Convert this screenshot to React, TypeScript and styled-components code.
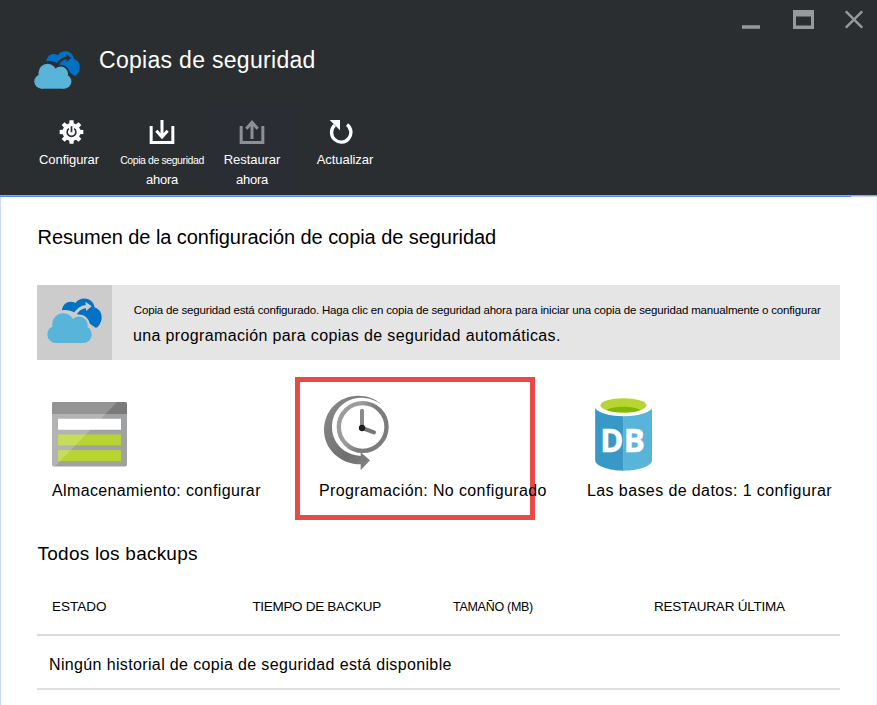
import React from "react";
import styled, { createGlobalStyle } from "styled-components";

const HEADER_BG = "#2a2e31";

const GlobalStyle = createGlobalStyle`
  *, *::before, *::after { box-sizing: border-box; }
  body {
    margin: 0;
    overflow: hidden;
    background: #fff;
    font-family: "Liberation Sans", Arial, sans-serif;
  }
`;

const Blade = styled.div`
  display: flex;
  flex-direction: column;
  width: 877px;
  height: 705px;
  overflow: hidden;
`;

const Header = styled.header`
  display: flex;
  flex-direction: column;
  height: 195px;
  background: ${HEADER_BG};
`;

const WindowControls = styled.div`
  display: flex;
  justify-content: flex-end;
  align-items: flex-end;
  height: 29px;
  padding-right: 14px;
`;

const ControlIcon = styled.svg<{ $gap?: number }>`
  display: block;
  height: 19px;
  margin-left: ${(p) => p.$gap ?? 0}px;
`;

const TitleRow = styled.div`
  display: flex;
  height: 74px;
  padding: 17px 0 0 34px;
`;

const Title = styled.h1`
  margin: 0 0 0 19px;
  font-size: 23px;
  font-weight: 400;
  line-height: 28px;
  letter-spacing: 0.3px;
  color: #fff;
  white-space: nowrap;
`;

const CloudSvg = styled.svg<{ $top?: number }>`
  display: block;
  flex: none;
  margin-top: ${(p) => p.$top ?? 0}px;
`;

const Toolbar = styled.nav`
  display: flex;
  flex: 1;
  padding-left: 24px;
`;

const ToolButton = styled.button<{ $active?: boolean; $gap?: number }>`
  display: flex;
  flex-direction: column;
  align-items: center;
  width: 90px;
  height: 92px;
  margin: 0 0 0 ${(p) => p.$gap ?? 0}px;
  padding: 17px 0 0;
  border: 0;
  background: ${(p) => (p.$active ? "#2b2d35" : "transparent")};
  color: #fff;
  font-family: inherit;
`;

const ToolIcon = styled.svg<{ $shift?: number }>`
  display: block;
  width: 26px;
  height: 24px;
  margin: 0 0 6px;
  transform: translateX(${(p) => p.$shift ?? 0}px);
`;

const ToolLabel = styled.span<{ $size?: number; $spacing?: number }>`
  font-size: ${(p) => p.$size ?? 13}px;
  line-height: 20px;
  letter-spacing: ${(p) => p.$spacing ?? -0.05}px;
  white-space: nowrap;
`;

const RuleTrack = styled.div`
  flex: none;
  background: linear-gradient(#9ba3b8 50%, #c3d5fb 50%);
`;

const HeaderRule = styled.div`
  height: 2px;
  margin-right: 26px;
  border-top: 1px solid #93a3cb;
  background: #4f8ef5;
`;

const Main = styled.main`
  flex: 1;
  padding: 28px 36px 0 36px;
  border-left: 1px solid #c9dafc;
  border-right: 1px solid #eef2fe;
  background: #fff;
  color: #000;
`;

const Heading = styled.h2<{ $size: number; $spacing: number }>`
  margin: 0;
  padding-left: 0.6px;
  font-size: ${(p) => p.$size}px;
  font-weight: 400;
  line-height: 24px;
  letter-spacing: ${(p) => p.$spacing}px;
  white-space: nowrap;
`;

const Banner = styled.section`
  display: flex;
  width: 802.5px;
  height: 75px;
  margin-top: 36px;
  background: #e5e5e5;
`;

const BannerIcon = styled.div`
  flex: none;
  width: 75px;
  height: 75px;
  padding: 13px 0 0 10px;
  background: #ccc;
`;

const BannerText = styled.div`
  padding: 12px 0 0 21px;
`;

const BannerLine = styled.div<{ $size: number; $spacing: number; $indent?: number }>`
  height: 26px;
  padding-left: ${(p) => p.$indent ?? 0}px;
  font-size: ${(p) => p.$size}px;
  line-height: 26px;
  letter-spacing: ${(p) => p.$spacing}px;
  white-space: nowrap;
`;

const Tiles = styled.section`
  display: grid;
  grid-template-columns: 258px 240px 305px;
  height: 143px;
  margin-top: 17px;
`;

const Tile = styled.div<{ $indent: number; $highlight?: boolean }>`
  display: flex;
  flex-direction: column;
  padding-left: ${(p) => p.$indent}px;
  border: 5px solid ${(p) => (p.$highlight ? "#ea4a45" : "transparent")};
`;

const TileIcon = styled.div<{ $top: number; $left?: number }>`
  height: 99px;
  padding: ${(p) => p.$top}px 0 0 ${(p) => p.$left ?? 0}px;
  svg { display: block; }
`;

const TileLabel = styled.span<{ $spacing: number }>`
  font-size: 16px;
  line-height: 20px;
  letter-spacing: ${(p) => p.$spacing}px;
  white-space: nowrap;
`;

const BackupsSection = styled.section`
  margin-top: 22px;
`;

const TableHead = styled.div`
  display: grid;
  grid-template-columns: 200.4px 200.6px 201px 1fr;
  width: 802.5px;
  height: 70px;
  padding: 31px 0 0 15px;
  border-bottom: 2px solid #dcdcdc;
`;

const ColumnName = styled.span<{ $size?: number; $spacing: number }>`
  font-size: ${(p) => p.$size ?? 13.5}px;
  line-height: 20px;
  letter-spacing: ${(p) => p.$spacing}px;
  white-space: nowrap;
`;

const EmptyRow = styled.div`
  width: 802.5px;
  height: 54px;
  padding: 19px 0 0 12px;
  border-bottom: 2px solid #e0e0e0;
  font-size: 16px;
  line-height: 20px;
  letter-spacing: 0.36px;
  white-space: nowrap;
`;

function CloudIcon({ width, bg, top }: { width: number; bg: string; top?: number }) {
  const front = (
    <>
      <circle cx="78" cy="166" r="26" />
      <circle cx="100" cy="135" r="33" />
      <circle cx="147" cy="139" r="27" />
      <circle cx="160" cy="166" r="26" />
      <rect x="78" y="140" width="82" height="52" />
    </>
  );
  return (
    <CloudSvg width={width} height={(width * 138) / 166} viewBox="51 56 166 138" $top={top}>
      <path
        fill="#0072c6"
        d="M96 93C98 70 120 61 137 71C150 50 190 52 195 85C217 91 223 118 207 140C202 147 196 147 192 142L150 112C140 100 120 90 96 93Z"
      />
      <g fill={bg} stroke={bg} strokeWidth="13">{front}</g>
      <path d="M134 108C142 92 152 83 170 81.500" fill="none" stroke={bg} strokeWidth="9" />
      <path d="M167 67L186 81L169 95Z" fill={bg} />
      <g fill="#59b4d9">{front}</g>
    </CloudSvg>
  );
}

function GearIcon() {
  return (
    <ToolIcon viewBox="176 45 78 72" $shift={2.5}>
      <g transform="translate(215 81)">
        {[0, 45, 90, 135].map((a) => (
          <path key={a} d="M-6 -35.5H6L9 0L6 35.5H-6L-9 0Z" fill="#fff" transform={`rotate(${a})`} />
        ))}
        <circle r="27" fill="#fff" />
        <path d="M-8 -10A13 13 0 1 0 8 -10" fill="none" stroke={HEADER_BG} strokeWidth="5" />
        <path d="M0 -17V1" stroke={HEADER_BG} strokeWidth="5" />
      </g>
    </ToolIcon>
  );
}

function TrayIcon({ up }: { up?: boolean }) {
  return (
    <ToolIcon viewBox="445 45 78 72" fill="none" stroke={up ? "#8e9095" : "#fff"} strokeWidth="9">
      <path d="M451.5 63V112.5H516.5V63" />
      {up ? (
        <path d="M484 102V52M467 71L484 52L501 71" />
      ) : (
        <path d="M484 45V95M467 77L484 96L501 77" />
      )}
    </ToolIcon>
  );
}

function RefreshIcon() {
  return (
    <ToolIcon viewBox="984 45 78 72" $shift={-4}>
      <path d="M1041 59A29 29 0 1 1 1004 61" fill="none" stroke="#fff" strokeWidth="10" />
      <path d="M989 45H1020V76Z" fill="#fff" />
    </ToolIcon>
  );
}

function StorageIcon() {
  return (
    <svg width="75" height="64.5" viewBox="66 95 225 193">
      <rect x="66" y="95" width="225" height="193" rx="6" fill="#a0a1a2" />
      <path d="M66 131V101Q66 95 72 95H285Q291 95 291 101V131Z" fill="#7a7a7a" />
      <rect x="84" y="145" width="189" height="33" fill="#fff" />
      <rect x="84" y="192" width="189" height="33" fill="#b8d432" />
      <rect x="84" y="239" width="189" height="33" fill="#b8d432" />
      <path d="M66 101Q66 95 72 95H261L75 288H72Q66 288 66 282Z" fill="#fff" opacity=".2" />
    </svg>
  );
}

function ClockIcon() {
  return (
    <svg width="66.7" height="76" viewBox="100 75 200 228">
      <defs>
        <linearGradient id="ring" x1="0" x2="1" y1="0" y2=".4">
          <stop offset=".4" stopColor="#9c9c9c" />
          <stop offset=".7" stopColor="#7c7c7c" />
        </linearGradient>
        <linearGradient id="sweep" x1="0" x2="1" y1="0" y2="1">
          <stop offset="0" stopColor="#8c8c8c" />
          <stop offset=".6" stopColor="#6f6f6f" />
          <stop offset="1" stopColor="#8c8c8c" />
        </linearGradient>
      </defs>
      <path
        fill="url(#sweep)"
        d="M276 104C258 86 232 77 205 77C148 77 103 122 103 180C103 238 152 283 213 283V301L241 271L213 247V258C165 255 127 220 127 172C127 120 165 86 212 83C238 83 260 91 276 104Z"
      />
      <circle cx="219" cy="171" r="71.5" fill="#fff" stroke="url(#ring)" strokeWidth="13" />
      <g strokeLinecap="round" strokeWidth="12">
        <path d="M217 122V172" stroke="#8a8a8a" />
        <path d="M217 174L253 187" stroke="#777" />
      </g>
      <circle cx="217" cy="174" r="9.5" fill="#1e1e1e" />
    </svg>
  );
}

function DatabaseIcon() {
  return (
    <svg width="57.3" height="73" viewBox="103.5 54 172 219">
      <path d="M104 80V240C104 258 145 272 189 272V80Z" fill="#3999c6" />
      <path d="M188 80V272C235 272 275 258 275 240V80Z" fill="#59b4d9" />
      <ellipse cx="189.500" cy="78" rx="87" ry="31" fill="#fff" />
      <ellipse cx="189" cy="76" rx="69" ry="21.500" fill="#b8d432" />
      <path d="M138 90C160 77 218 77 240 90C220 100 160 100 138 90Z" fill="#7fba00" />
      <g
        fill="#fff"
        stroke="#fff"
        strokeWidth="1.500"
        fontFamily="'Open Sans', 'Noto Sans', sans-serif"
        fontWeight="700"
        fontSize="94"
      >
        <text x="119" y="215">D</text>
        <text x="189.500" y="215">B</text>
      </g>
    </svg>
  );
}

export default function App() {
  return (
    <>
      <GlobalStyle />
      <Blade>
        <Header>
          <WindowControls>
            <ControlIcon width="18" viewBox="0 0 18 19">
              <path d="M0 17H18" stroke="#98999c" strokeWidth="3.500" />
            </ControlIcon>
            <ControlIcon width="21" viewBox="0 0 21 19" $gap={33}>
              <path d="M0 0H21V19H0ZM3 6.500V15.500H18V6.500Z" fill="#98999c" fillRule="evenodd" />
            </ControlIcon>
            <ControlIcon width="18" viewBox="0 0 18 19" $gap={31}>
              <path d="M.8 1.300L17.200 17.700M17.200 1.300L.8 17.700" stroke="#98999c" strokeWidth="2.500" />
            </ControlIcon>
          </WindowControls>
          <TitleRow>
            <CloudIcon width={46} bg={HEADER_BG} top={4.5} />
            <Title>Copias de seguridad</Title>
          </TitleRow>
          <Toolbar>
            <ToolButton>
              <GearIcon />
              <ToolLabel $spacing={-0.075}>Configurar</ToolLabel>
            </ToolButton>
            <ToolButton $gap={3}>
              <TrayIcon />
              <ToolLabel $size={10.5} $spacing={-0.41}>Copia de seguridad</ToolLabel>
              <ToolLabel $spacing={-0.2}>ahora</ToolLabel>
            </ToolButton>
            <ToolButton $active>
              <TrayIcon up />
              <ToolLabel>Restaurar</ToolLabel>
              <ToolLabel $spacing={-0.2}>ahora</ToolLabel>
            </ToolButton>
            <ToolButton $gap={3}>
              <RefreshIcon />
              <ToolLabel>Actualizar</ToolLabel>
            </ToolButton>
          </Toolbar>
        </Header>
        <RuleTrack>
          <HeaderRule />
        </RuleTrack>
        <Main>
          <Heading $size={20} $spacing={-0.06}>
            Resumen de la configuración de copia de seguridad
          </Heading>
          <Banner>
            <BannerIcon>
              <CloudIcon width={55} bg="#ccc" />
            </BannerIcon>
            <BannerText>
              <BannerLine $size={11.5} $spacing={-0.168} $indent={0.8}>
                Copia de seguridad está configurado. Haga clic en copia de seguridad ahora para iniciar una copia de seguridad manualmente o configurar
              </BannerLine>
              <BannerLine $size={16} $spacing={0.36}>
                una programación para copias de seguridad automáticas.
              </BannerLine>
            </BannerText>
          </Banner>
          <Tiles>
            <Tile $indent={10}>
              <TileIcon $top={20}>
                <StorageIcon />
              </TileIcon>
              <TileLabel $spacing={0.37}>Almacenamiento: configurar</TileLabel>
            </Tile>
            <Tile $indent={19} $highlight>
              <TileIcon $top={13} $left={4.3}>
                <ClockIcon />
              </TileIcon>
              <TileLabel $spacing={0.385}>Programación: No configurado</TileLabel>
            </Tile>
            <Tile $indent={47}>
              <TileIcon $top={16} $left={7.5}>
                <DatabaseIcon />
              </TileIcon>
              <TileLabel $spacing={0.4}>Las bases de datos: 1 configurar</TileLabel>
            </Tile>
          </Tiles>
          <BackupsSection>
            <Heading $size={19} $spacing={0.22}>Todos los backups</Heading>
            <TableHead>
              <ColumnName $spacing={0}>ESTADO</ColumnName>
              <ColumnName $spacing={-0.31}>TIEMPO DE BACKUP</ColumnName>
              <ColumnName $size={12.5} $spacing={-0.28}>TAMAÑO (MB)</ColumnName>
              <ColumnName $spacing={-0.233}>RESTAURAR ÚLTIMA</ColumnName>
            </TableHead>
            <EmptyRow>Ningún historial de copia de seguridad está disponible</EmptyRow>
          </BackupsSection>
        </Main>
      </Blade>
    </>
  );
}
